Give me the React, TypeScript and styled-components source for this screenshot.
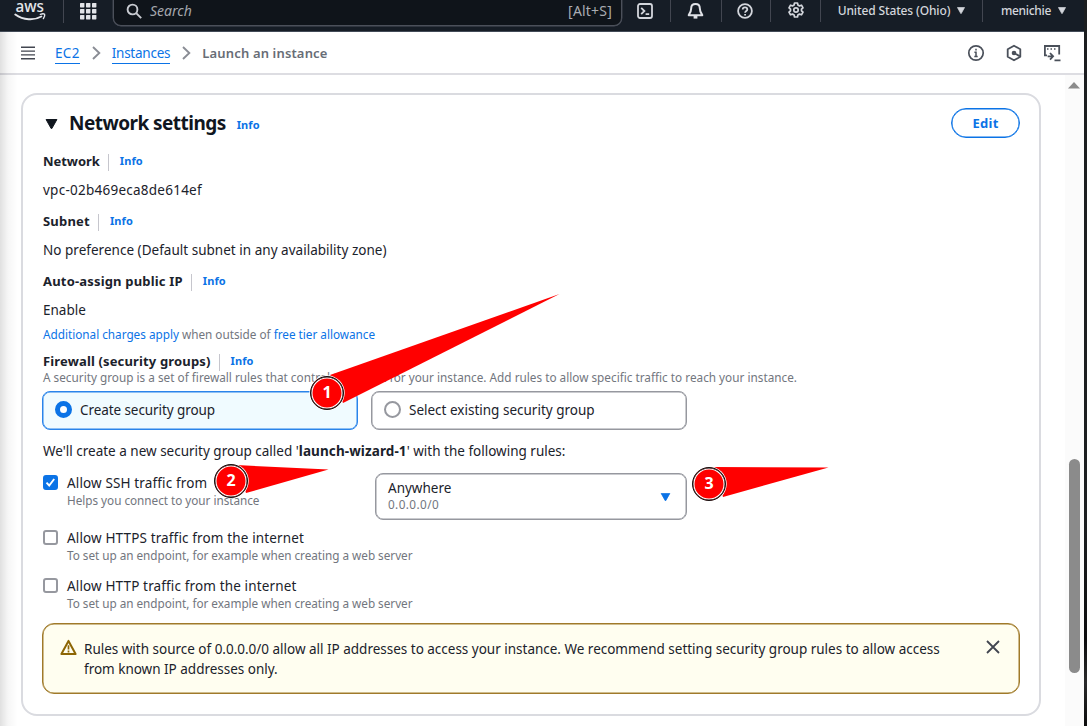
import React from 'react';
import styled, { createGlobalStyle } from 'styled-components';

const BLUE = '#0b73e6';

const Global = createGlobalStyle`
  * { box-sizing: border-box; }
  body {
    margin: 0;
    background: #fff;
    color: #1b222b;
    font: 13.5px/20px 'Noto Sans', sans-serif;
    overflow: hidden;
  }
`;

const Screen = styled.div`
  position: relative;
  display: flex;
  width: 1087px;
  height: 726px;
  overflow: hidden;
`;
const Page = styled.div`
  display: flex;
  flex-direction: column;
  width: 1084px;
`;
const WindowEdge = styled.div`
  width: 3px;
  background: linear-gradient(#1c1e20, #1c1e20 72%, #0c0c0d 88%, #2a2a2b 94%, #0c0c0d);
`;

/* Top navigation */
const TopBar = styled.header`
  display: flex;
  align-items: flex-start;
  height: 32px;
  background: #161d26;
  border-bottom: 1px solid #424b57;
  color: #d3d6dc;
`;
const LogoCell = styled.div`
  width: 64px;
  height: 23px;
  padding-left: 14px;
  border-right: 1px solid #424650;
`;
const GridCell = styled.div`
  width: 49px;
  padding: 2px 0 0 16px;
`;
const SearchBox = styled.div`
  display: flex;
  align-items: center;
  width: 509px;
  height: 26px;
  padding: 0 9px 3px 12px;
  background: #0f141a;
  border: 1px solid #4b505a;
  border-top: 0;
  border-radius: 0 0 8px 8px;
  box-shadow: 0 0 0 0.4px #4b505a;
`;
const SearchHint = styled.span`
  flex: 1;
  margin-left: 8px;
  font-size: 14px;
  font-style: italic;
  color: #a4a7ad;
`;
const Shortcut = styled.span`
  font-size: 14px;
  letter-spacing: 0.2px;
  color: #a9acb2;
`;
const TopCell = styled.div<{ $w: number; $last?: boolean; $up?: boolean }>`
  display: flex;
  align-items: center;
  justify-content: center;
  width: ${(p) => p.$w}px;
  height: 22px;
  padding-right: ${(p) => (p.$up ? 0 : 2)}px;
  padding-bottom: ${(p) => (p.$up ? 3 : 0)}px;
  border-right: ${(p) => (p.$last ? 0 : 1)}px solid #424650;
`;
const TopMenu = styled(TopCell)`
  gap: 7px;
  padding: 0 0 1px;
  font-size: 12px;
  font-weight: 500;
  letter-spacing: -0.13px;
  white-space: nowrap;
`;
const UserMenu = styled(TopMenu)`
  padding-left: 1px;
  letter-spacing: -0.3px;
`;

/* Breadcrumb bar */
const CrumbBar = styled.nav`
  display: flex;
  align-items: center;
  height: 43px;
  padding: 0 23px 0 21px;
  border-bottom: 2px solid #dddde2;
`;
const Crumb = styled.a<{ $ls?: number }>`
  height: 20px;
  line-height: 18px;
  margin-top: 2px;
  color: ${BLUE};
  border-bottom: 1px solid ${BLUE};
  letter-spacing: ${(p) => p.$ls ?? 0}px;
`;
const CurrentCrumb = styled.span`
  font-size: 13px;
  font-weight: 600;
  letter-spacing: 0.15px;
  color: #686d76;
`;
const Chevron = styled.svg`
  margin: 0 11px 0 12px;
`;
const CrumbTools = styled.div`
  display: flex;
  align-items: center;
  gap: 20px;
  margin-left: auto;
`;

/* Body */
const Body = styled.main`
  display: flex;
  flex: 1;
  min-height: 0;
`;
const Content = styled.div`
  flex: 1;
  padding: 18px 0 0 21px;
`;
const Scrollbar = styled.div`
  display: flex;
  flex-direction: column;
  align-items: center;
  width: 19px;
  padding: 7px 1px 0 0;
  background: #fbfbfb;
`;
const Thumb = styled.div`
  width: 11px;
  height: 214px;
  margin-top: 370px;
  border-radius: 6px;
  background: #8b8b8b;
`;
const LeftShade = styled.div`
  position: absolute;
  left: 0;
  top: 32px;
  bottom: 0;
  width: 18px;
  background: linear-gradient(90deg, rgba(0, 0, 0, 0.12), rgba(0, 0, 0, 0.035) 45%, rgba(0, 0, 0, 0));
`;
const Card = styled.section`
  width: 1020px;
  height: 623px;
  padding: 13px 19px 0 20px;
  border: 2px solid #dadbe0;
  border-radius: 16px;
`;
const CardHead = styled.div`
  display: flex;
  align-items: center;
  height: 31px;
  padding-left: 2px;
`;
const Title = styled.h2`
  margin: 0 11px 2px 11px;
  font-size: 19px;
  font-weight: 700;
  letter-spacing: -0.54px;
  color: #10161e;
`;
const Info = styled.a`
  font-size: 11px;
  font-weight: 700;
  letter-spacing: 0.1px;
  color: ${BLUE};
`;
const TitleInfo = styled(Info)`
  margin-top: 3px;
`;
const EditButton = styled.button`
  width: 69px;
  height: 30px;
  margin: 0 0 1px auto;
  padding: 0;
  border: 1px solid ${BLUE};
  border-radius: 16px;
  box-shadow: inset 0 0 0 0.5px ${BLUE};
  background: #fff;
  color: ${BLUE};
  font: 700 13px/20px 'Noto Sans', sans-serif;
  letter-spacing: 0.3px;
`;
const FieldLabel = styled.div<{ $mt: number; $ls?: number }>`
  display: flex;
  align-items: center;
  height: 20px;
  margin-top: ${(p) => p.$mt}px;
  font-size: 13px;
  font-weight: 700;
  letter-spacing: ${(p) => p.$ls ?? 0}px;
`;
const LabelBar = styled.span`
  width: 1px;
  height: 17px;
  margin: 2px 11px 0 8px;
  background: #c6c6cd;
`;
const Value = styled.div<{ $ls?: number }>`
  height: 20px;
  margin-top: 9px;
  letter-spacing: ${(p) => p.$ls ?? 0}px;
`;
const Hint = styled.div<{ $mt?: number; $ls?: number }>`
  height: 16px;
  margin-top: ${(p) => p.$mt ?? 0}px;
  font-size: 11.75px;
  line-height: 16px;
  letter-spacing: ${(p) => p.$ls ?? 0}px;
  color: #72767e;
  white-space: nowrap;
  a { color: ${BLUE}; }
`;
const Tiles = styled.div`
  display: flex;
  gap: 13px;
  margin: 6px 0 0 -1px;
`;
const Tile = styled.label<{ $on?: boolean }>`
  display: flex;
  align-items: center;
  gap: 8px;
  width: 316px;
  height: 39px;
  padding: 0 0 2px 12px;
  border: 1px solid ${(p) => (p.$on ? '#2a84ea' : '#96989f')};
  box-shadow: inset 0 0 0 0.5px ${(p) => (p.$on ? '#2a84ea' : '#96989f')};
  border-radius: 8px;
  background: ${(p) => (p.$on ? '#f0fbff' : '#fff')};
  letter-spacing: ${(p) => (p.$on ? -0.08 : 0)}px;
`;
const Radio = styled.span<{ $on?: boolean }>`
  width: 17px;
  height: 17px;
  border: ${(p) => (p.$on ? `5px solid ${BLUE}` : '2px solid #96989f')};
  border-radius: 50%;
  background: #fff;
`;
const Sentence = styled.p`
  height: 20px;
  margin: 11px 0 12px;
  b { letter-spacing: 0.1px; }
`;
const SshRow = styled.div`
  display: flex;
  height: 47px;
  margin-bottom: 8px;
`;
const Option = styled.div<{ $w?: number; $h?: number }>`
  display: flex;
  gap: 9px;
  width: ${(p) => (p.$w ? `${p.$w}px` : 'auto')};
  height: ${(p) => p.$h ?? 48}px;
`;
const OptionLabel = styled.div`
  height: 19px;
  line-height: 20px;
  letter-spacing: 0.14px;
  white-space: nowrap;
`;
const Checkbox = styled.span<{ $on?: boolean }>`
  display: flex;
  width: 15px;
  height: 15px;
  margin-top: 2px;
  border: 2px solid ${(p) => (p.$on ? BLUE : '#96989f')};
  border-radius: 3px;
  background: ${(p) => (p.$on ? BLUE : '#fff')};
`;
const Select = styled.div`
  display: flex;
  align-items: center;
  justify-content: space-between;
  width: 312px;
  height: 47px;
  padding: 0 15px 0 12px;
  border: 1px solid #96989f;
  box-shadow: inset 0 0 0 0.5px #96989f;
  border-radius: 8px;
`;
const SelectText = styled.div`
  display: flex;
  flex-direction: column;
  padding-bottom: 2px;
  line-height: 18px;
`;
const Alert = styled.div`
  display: flex;
  height: 71px;
  padding: 15px 19px 0 17px;
  margin-left: -1px;
  border: 1px solid #a07a2a;
  box-shadow: inset 0 0 0 0.5px #a07a2a;
  border-radius: 12px;
  background: #fffef0;
`;
const AlertText = styled.div`
  width: 862px;
  margin-left: 7px;
  letter-spacing: -0.01px;
`;
const CloseIcon = styled.svg`
  margin: 1px 0 0 auto;
`;

/* Step markers laid over the page */
const Pointers = styled.svg`
  position: absolute;
  left: 0;
  top: 0;
`;
const Marker = styled.div<{ $x: number; $y: number }>`
  position: absolute;
  left: ${(p) => p.$x - 17}px;
  top: ${(p) => p.$y - 17}px;
  width: 34px;
  height: 34px;
  border: 1px solid #111;
  border-radius: 50%;
  background: #f00;
  box-shadow: inset 0 0 0 0.4px #111, inset 0 0 0 1.5px #fff, 0 0 0 0.7px #fff;
  color: #fff;
  font: 700 16px/31px 'Noto Sans', sans-serif;
  text-align: center;
`;

const Caret = ({ w, h, color }: { w: number; h: number; color: string }) => (
  <svg width={w} height={h} viewBox="0 0 12 10">
    <path d="M.6.5h10.8L6.3 9.6h-.6z" fill={color} stroke={color} strokeLinejoin="round" />
  </svg>
);

const Arrow = () => (
  <Chevron width="9" height="14" viewBox="0 0 9 14" fill="none" stroke="#8a8d95" strokeWidth="1.9">
    <path d="M1 1l6.300 6L1 13" />
  </Chevron>
);

export default function App() {
  return (
    <Screen>
      <Global />
      <Page>
        <TopBar>
          <LogoCell>
            <svg width="34" height="22" viewBox="0 0 34 22">
              <text x="1.5" y="12" fill="#e4e6ea" fontFamily="'Noto Sans', sans-serif" fontSize="16.5" fontWeight="500" textLength="28.5" lengthAdjust="spacingAndGlyphs">aws</text>
              <path d="M1.300 14.500c8 5.800 19 6.200 26 2" fill="none" stroke="#e4e6ea" strokeWidth="1.900" strokeLinecap="round" />
              <path d="M26.300 14.300c1.800-.6 3.600-.6 4.300-.1.400 1-.1 2.800-1.200 4.400" fill="none" stroke="#e4e6ea" strokeWidth="1.400" strokeLinecap="round" />
            </svg>
          </LogoCell>
          <GridCell>
            <svg width="17" height="18" viewBox="0 0 17 18" fill="#e2e4e8">
              {[1, 7, 13].map((y) => [0, 6, 12].map((x) => <rect key={`${x}-${y}`} x={x} y={y} width="4.4" height="4.4" rx=".6" />))}
            </svg>
          </GridCell>
          <SearchBox>
            <svg width="16" height="16" viewBox="0 0 16 16" fill="none" stroke="#c8cbd1" strokeWidth="1.9">
              <circle cx="6.500" cy="6.500" r="4.900" />
              <path d="M10.200 10.200l5 5" />
            </svg>
            <SearchHint>Search</SearchHint>
            <Shortcut>[Alt+S]</Shortcut>
          </SearchBox>
          <TopCell $w={49}>
            <svg width="16" height="16" viewBox="0 0 16 16" fill="none" stroke="#d3d6dc" strokeWidth="1.8">
              <rect x="1" y="1" width="14" height="14" rx="2" />
              <path d="M4.200 4.800L7.400 8l-3.200 3.200M8.600 11.200h3.600" />
            </svg>
          </TopCell>
          <TopCell $w={51}>
            <svg width="17" height="18" viewBox="0 0 17 18" fill="none" stroke="#e0e2e7" strokeWidth="2" strokeLinejoin="round">
              <path d="M8.500 2C5.700 2 4.200 3.900 4.200 6.300c0 3.200-.9 4.800-2.500 6.900h13.600c-1.600-2.100-2.500-3.700-2.500-6.900C12.800 3.900 11.300 2 8.500 2z" />
              <path d="M6.600 15.300h3.800" strokeWidth="2.600" />
            </svg>
          </TopCell>
          <TopCell $w={49}>
            <svg width="16" height="16" viewBox="0 0 16 16" fill="none" stroke="#d3d6dc" strokeWidth="1.8">
              <circle cx="8" cy="8" r="6.900" />
              <path d="M5.700 6.500C5.700 5 6.700 4.300 8 4.300s2.300.8 2.300 2.100c0 1.500-2.200 1.600-2.200 3.300M8.100 10.900v1.600" />
            </svg>
          </TopCell>
          <TopCell $w={50} $up>
            <svg width="16" height="16" viewBox="0 0 16 16" fill="none" stroke="#d3d6dc" strokeWidth="1.7" strokeLinejoin="round">
              <path d="M6.500 1h3l.4 2 1.600.9 2-.7 1.500 2.600L13.500 7.200v1.600l1.500 1.400-1.500 2.600-2-.7-1.600.9-.4 2h-3l-.4-2-1.600-.9-2 .7L1 10.200l1.500-1.400V7.200L1 5.800l1.500-2.600 2 .7L6.100 3z" />
              <circle cx="8" cy="8" r="2.200" />
            </svg>
          </TopCell>
          <TopMenu $w={162}>
            United States (Ohio)
            <Caret w={8} h={7} color="#d3d6dc" />
          </TopMenu>
          <UserMenu $w={100} $last>
            menichie
            <Caret w={8} h={7} color="#d3d6dc" />
          </UserMenu>
        </TopBar>

        <CrumbBar>
          <svg width="34" height="16" viewBox="0 0 34 16" stroke="#424650" strokeWidth="1.4">
            <path d="M0 2.300h14M0 6.100h14M0 9.900h14M0 13.700h14" />
          </svg>
          <Crumb $ls={0.3}>EC2</Crumb>
          <Arrow />
          <Crumb $ls={-0.23}>Instances</Crumb>
          <Arrow />
          <CurrentCrumb>Launch an instance</CurrentCrumb>
          <CrumbTools>
            <svg width="18" height="18" viewBox="0 0 18 18" fill="none" stroke="#4a505a" strokeWidth="1.7">
              <circle cx="9" cy="9" r="7.200" />
              <path d="M9 4.800v1.800M7.400 8.300H9v4M7.300 12.400h3.400" strokeWidth="1.5" />
            </svg>
            <svg width="18" height="18" viewBox="0 0 18 18" fill="none" stroke="#4a505a" strokeWidth="1.8">
              <path d="M9 1.700l6.300 3.500v7.600L9 16.300l-6.300-3.500V5.200z" strokeLinejoin="round" />
              <circle cx="9" cy="9" r="2.300" fill="#4a505a" stroke="none" />
              <path d="M9 9l6 3.400" />
            </svg>
            <svg width="18" height="18" viewBox="0 0 18 18" fill="none" stroke="#4a505a" strokeWidth="1.8">
              <path d="M4 11.300H1.900V2h14.300v8.500" />
              <path d="M4 5h1.500M7.500 5H9M11 5h1.500" strokeWidth="1.5" />
              <path d="M4.600 12.300h4.800M7 9l3.100 3.300L7 15.600M11.500 16.400h6" />
            </svg>
          </CrumbTools>
        </CrumbBar>

        <Body>
          <Content>
            <Card>
              <CardHead>
                <Caret w={13} h={10} color="#10161e" />
                <Title>Network settings</Title>
                <TitleInfo>Info</TitleInfo>
                <EditButton>Edit</EditButton>
              </CardHead>

              <FieldLabel $mt={12} $ls={-0.05}>Network<LabelBar /><Info>Info</Info></FieldLabel>
              <Value $ls={0.25}>vpc-02b469eca8de614ef</Value>
              <FieldLabel $mt={11} $ls={0.2}>Subnet<LabelBar /><Info>Info</Info></FieldLabel>
              <Value $ls={0.02}>No preference (Default subnet in any availability zone)</Value>
              <FieldLabel $mt={11} $ls={0.18}>Auto-assign public IP<LabelBar /><Info>Info</Info></FieldLabel>
              <Value>Enable</Value>
              <Hint $mt={6} $ls={-0.01}><a>Additional charges apply</a> when outside of <a>free tier allowance</a></Hint>
              <FieldLabel $mt={9} $ls={0.15}>Firewall (security groups)<LabelBar /><Info>Info</Info></FieldLabel>
              <Hint $mt={-2} $ls={0.01}>
                A security group is a set of firewall rules that control the traffic for your instance. Add rules to allow specific traffic to reach your instance.
              </Hint>

              <Tiles>
                <Tile $on><Radio $on />Create security group</Tile>
                <Tile><Radio />Select existing security group</Tile>
              </Tiles>

              <Sentence>We'll create a new security group called '<b>launch-wizard-1</b>' with the following rules:</Sentence>

              <SshRow>
                <Option $w={332}>
                  <Checkbox $on>
                    <svg width="11" height="11" viewBox="0 0 11 11" fill="none" stroke="#fff" strokeWidth="1.9">
                      <path d="M1.500 5.700l2.700 2.800 5-6.500" />
                    </svg>
                  </Checkbox>
                  <div>
                    <OptionLabel>Allow SSH traffic from</OptionLabel>
                    <Hint $ls={-0.03}>Helps you connect to your instance</Hint>
                  </div>
                </Option>
                <Select>
                  <SelectText>
                    Anywhere
                    <Hint $mt={-1} $ls={0.4}>0.0.0.0/0</Hint>
                  </SelectText>
                  <Caret w={11} h={8} color={BLUE} />
                </Select>
              </SshRow>
              <Option>
                <Checkbox />
                <div>
                  <OptionLabel>Allow HTTPS traffic from the internet</OptionLabel>
                  <Hint $ls={-0.03}>To set up an endpoint, for example when creating a web server</Hint>
                </div>
              </Option>
              <Option $h={47}>
                <Checkbox />
                <div>
                  <OptionLabel>Allow HTTP traffic from the internet</OptionLabel>
                  <Hint $ls={-0.03}>To set up an endpoint, for example when creating a web server</Hint>
                </div>
              </Option>

              <Alert>
                <svg width="17" height="17" viewBox="0 0 17 17" fill="none" stroke="#8d6605" strokeWidth="2" strokeLinejoin="round">
                  <path d="M8.500 1.900L15.600 15H1.400z" />
                  <path d="M8.500 6.200v4.200M8.500 11.600v1.800" strokeWidth="1.7" />
                </svg>
                <AlertText>
                  Rules with source of 0.0.0.0/0 allow all IP addresses to access your instance. We recommend setting security group rules to allow access from known IP addresses only.
                </AlertText>
                <CloseIcon width="14" height="14" viewBox="0 0 14 14" stroke="#424650" strokeWidth="1.8">
                  <path d="M1 1l12 12M13 1L1 13" />
                </CloseIcon>
              </Alert>
            </Card>
          </Content>
          <Scrollbar>
            <svg width="12" height="7" viewBox="0 0 12 7"><path d="M6 0l6 6.500H0z" fill="#8b8b8b" /></svg>
            <Thumb />
          </Scrollbar>
        </Body>
      </Page>
      <WindowEdge />
      <LeftShade />
      <Pointers width="1087" height="726" viewBox="0 0 1087 726" fill="#f00">
        <path d="M559.500 294L330 375l13 28z" />
        <path d="M328.500 469.500L236 465l10 28z" />
        <path d="M828.500 467.500L714 467l9 30z" />
      </Pointers>
      <Marker $x={327} $y={393}>1</Marker>
      <Marker $x={231} $y={481}>2</Marker>
      <Marker $x={709} $y={484}>3</Marker>
    </Screen>
  );
}
